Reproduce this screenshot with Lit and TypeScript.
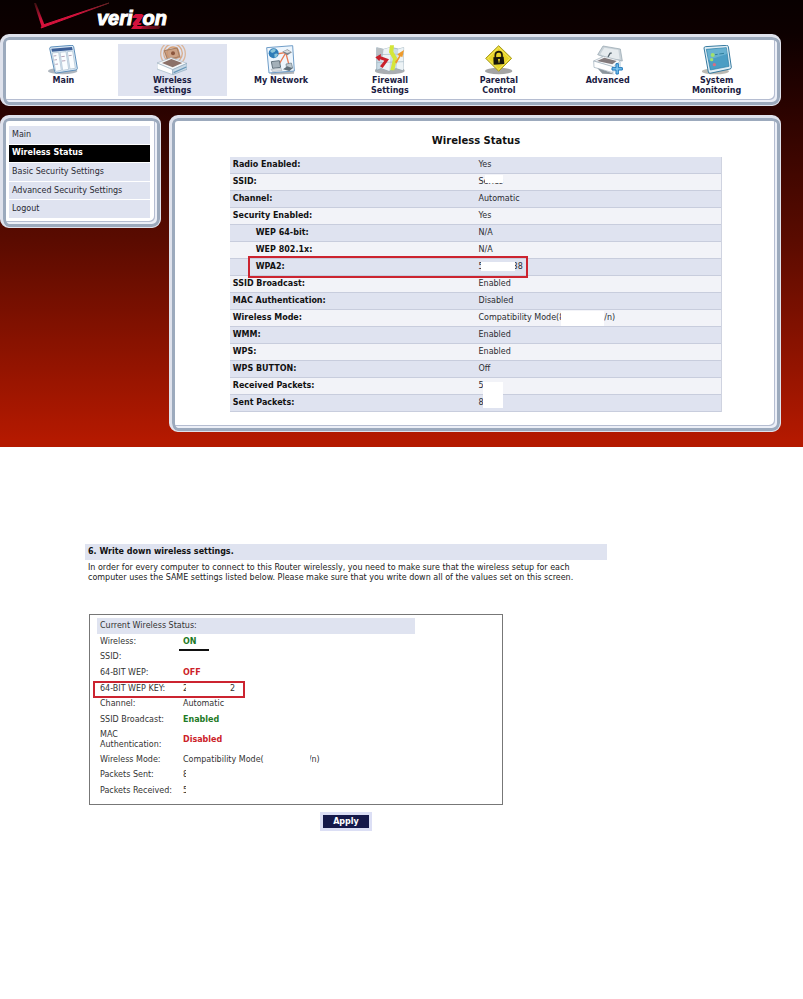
import { LitElement, html, svg, css, nothing, TemplateResult } from "lit";
import { customElement, property } from "lit/decorators.js";
import { classMap } from "lit/directives/class-map.js";

const icons: Record<string, TemplateResult> = {
  main: svg`
    <ellipse cx="44" cy="78" rx="44" ry="10" fill="#8b97a3" opacity=".7"/>
    <path d="M5 10Q5 7 9 6L72 1Q76 1 77 5L88 70Q88 74 84 75L25 84Q21 84 20 80Z" fill="#d9e8f5" stroke="#5d8fbb" stroke-width="3"/>
    <path d="M10 11L72 6L74 15L12 20Z" fill="#3d5f97"/>
    <path d="M13 24L32 22L40 76L23 79ZM36 22L54 20L62 73L44 76ZM58 20L74 18L82 70L66 72Z" fill="#fafdff" stroke="#a9bccd" stroke-width="2"/>
    <path d="M17 33l8-1M19 45l8-1M22 58l8-1M40 35l10-1M42 48l10-1M62 32l9-1" stroke="#a790a8" stroke-width="2.5"/>`,
  wireless: svg`
    <g fill="none" stroke="#d79f72" stroke-width="4"><circle cx="48" cy="26" r="37" opacity=".65"/><circle cx="48" cy="25" r="28" opacity=".8"/><circle cx="48" cy="24" r="18"/></g>
    <path d="M20 16L62 7L72 38L30 49Z" fill="#c99673" opacity=".85"/>
    <path d="M22 17L60 9L68 35L32 43Z" fill="none" stroke="#8d6b56" stroke-width="2"/>
    <circle cx="48" cy="25" r="6" fill="#8b563d"/>
    <path d="M0 54L42 38L90 55L47 74Z" fill="#f5f8fa" stroke="#a7b7c4" stroke-width="2"/>
    <path d="M15 54L43 42L76 54L47 67Z" fill="#8b7169"/>
    <path d="M0 54L47 74V89L0 72Z" fill="#fff" stroke="#9fb3c2" stroke-width="2"/>
    <path d="M47 74L90 55V73L47 89Z" fill="#c8d9e6" stroke="#8da7bc" stroke-width="2"/>
    <path d="M50 83L88 66" stroke="#6796b8" stroke-width="4"/>`,
  network: svg`
    <path d="M10 78L85 72L84 86L16 89Z" fill="#858d94" opacity=".65"/>
    <path d="M2 8L80 2L85 78L9 84Z" fill="#eef6fd" stroke="#6f9dc8" stroke-width="3"/>
    <path d="M31 27L62 22M59 24L39 58M60 25L70 64" stroke="#e77b55" stroke-width="4" fill="none"/>
    <circle cx="23" cy="25" r="15" fill="#2e7cb8"/>
    <path d="M12 18q8-9 18-4q-3 9-12 10zM25 28q7-5 11 0q-4 10-10 10z" fill="#8dc5d9"/>
    <path d="M49 20L64 13L78 22L64 31Z" fill="#7c858e"/><path d="M52 19L64 15L75 21L63 24Z" fill="#d9dde0"/>
    <path d="M16 50L40 47L44 67L20 70Z" fill="#a3b0b9" stroke="#657580" stroke-width="3"/>
    <path d="M15 73L45 69L48 77L20 80Z" fill="#dbe0e4" stroke="#788590"/>
    <path d="M60 57L76 54L80 69L62 72Z" fill="#bec9d0" stroke="#687984" stroke-width="2"/>
    <path d="M51 73L64 64L80 70L70 78Z" fill="#606e78"/>`,
  firewall: svg`
    <ellipse cx="44" cy="77" rx="45" ry="11" fill="#7d8388" opacity=".65"/>
    <path d="M5 8L26 13L48 7L70 12L86 8L84 76L65 70L43 78L20 70L5 76Z" fill="#cbdce7" stroke="#8ca4b2" stroke-width="2"/>
    <path d="M5 8L26 13L22 34H5Z" fill="#b9bfc3"/>
    <path d="M26 13L48 7L43 78L20 70ZM70 12L86 8L84 76L65 70Z" fill="#edf3f6"/>
    <path d="M5 29L87 27M5 53L86 50" stroke="#a5b9c6" stroke-width="2"/>
    <path d="M45 1H57L55 20L66 38L58 76H46L54 42L42 22Z" fill="#d4e639"/>
    <path d="M1 37L18 27L17 34L42 43L23 69L15 64L28 47L15 43L13 49Z" fill="#c9212b"/>
    <path d="M60 51L72 33L67 28L87 15L82 37L77 34L64 56Z" fill="#ee9a2c"/>`,
  parental: svg`
    <ellipse cx="44" cy="78" rx="41" ry="10" fill="#858585" opacity=".75"/>
    <path d="M44 2L83 40L44 79L5 40Z" fill="#e8d62a" stroke="#a59a22" stroke-width="3"/>
    <path d="M44 8L77 40L44 73L11 40Z" fill="none" stroke="#f8ed76" stroke-width="2"/>
    <path d="M34 39V30Q34 21 44 20Q53 20 54 29V38" fill="none" stroke="#17160b" stroke-width="5"/>
    <path d="M28 37L59 35L61 57L29 59Z" fill="#17160b"/>
    <circle cx="45" cy="44" r="3" fill="#e8d62a"/><path d="M45 44V53" stroke="#e8d62a" stroke-width="3"/>`,
  advanced: svg`
    <path d="M10 66L65 88L28 86Z" fill="#8c969d"/>
    <path d="M14 29L30 3L82 12L88 48L60 46Z" fill="#c9d2d8" stroke="#8fa0ab" stroke-width="2"/>
    <path d="M22 28L34 8L76 15L80 42L58 43Z" fill="#e6ebee"/>
    <path d="M45 36L51 25L56 24" stroke="#56646e" stroke-width="4" fill="none"/>
    <path d="M2 48L32 34L83 47L60 66Z" fill="#f7f9fb" stroke="#9daab3" stroke-width="2"/>
    <path d="M12 48L34 38L71 48L58 58Z" fill="#837a7c"/>
    <path d="M2 48L60 65V83L3 67Z" fill="#fff" stroke="#9bacb8" stroke-width="2"/>
    <path d="M60 65L84 48V67L60 83Z" fill="#d5e2eb"/>
    <path d="M69 56H76V68H88V75H76V87H69V75H57V68H69Z" fill="#7cc4ee" stroke="#1c76bb" stroke-width="3"/>`,
  monitoring: svg`
    <ellipse cx="40" cy="79" rx="41" ry="9" fill="#8f8a7e" opacity=".6"/>
    <path d="M6 9Q6 6 10 5L74 1Q78 1 79 5L88 67Q88 71 84 72L24 85Q20 85 19 81Z" fill="#e1eff6" stroke="#367aa0" stroke-width="3"/>
    <path d="M13 13L73 8L81 64L25 75Z" fill="#4b9dc4" stroke="#2579a2" stroke-width="2"/>
    <path d="M15 14L73 9L75 27L20 45Z" fill="#78bcd8" opacity=".65"/>
    <path d="M39 29l8-1M52 27l14-2" stroke="#317f9d" stroke-width="3"/>
    <g fill="#a2e16b"><circle cx="32" cy="30" r="6"/><circle cx="29" cy="44" r="5"/></g><circle cx="37" cy="59" r="5" fill="#d76e83"/>`,
};

interface Piece {
  text: string;
  kind: string;
}
interface Row {
  label: string;
  value: string | Piece[];
  kind?: string;
}

const cell = (value: string | Piece[]) =>
  typeof value === "string"
    ? value
    : value.map((p) => html`<span class="piece ${p.kind}">${p.text}</span>`);

@customElement("top-nav")
class TopNav extends LitElement {
  static styles = css`
    :host { display: block; }
    nav { display: grid; grid-template-columns: repeat(7, 1fr); }
    a {
      display: flex; flex-direction: column; align-items: center;
      min-height: 51px; color: #1b1b42; text-decoration: none;
      font-weight: bold; line-height: 10px; text-align: center;
    }
    a.active { background: #dfe3f0; }
    svg { width: 30px; height: 30px; margin: 1px 0; }
    span { max-width: 72px; }
  `;
  private items = [
    ["main", "Main"],
    ["wireless", "Wireless Settings"],
    ["network", "My Network"],
    ["firewall", "Firewall Settings"],
    ["parental", "Parental Control"],
    ["advanced", "Advanced"],
    ["monitoring", "System Monitoring"],
  ];
  render() {
    return html`<nav>
      ${this.items.map(
        ([icon, label]) => html`<a href="#${icon}" class=${classMap({ active: icon === "wireless" })}>
          <svg viewBox="0 0 90 90" aria-hidden="true">${icons[icon]}</svg><span>${label}</span>
        </a>`
      )}
    </nav>`;
  }
}

@customElement("side-menu")
class SideMenu extends LitElement {
  static styles = css`
    :host { display: block; }
    nav { display: grid; grid-auto-rows: 1fr; gap: 1px; min-height: 92px; }
    a {
      display: flex; align-items: center; padding: 0 3px;
      background: #dfe3f0; color: #2a2a33; text-decoration: none;
    }
    a.active { background: #000; color: #fff; font-weight: bold; }
  `;
  private items = ["Main", "Wireless Status", "Basic Security Settings", "Advanced Security Settings", "Logout"];
  render() {
    return html`<nav>
      ${this.items.map(
        (t) => html`<a href="#" class=${classMap({ active: t === "Wireless Status" })}>${t}</a>`
      )}
    </nav>`;
  }
}

@customElement("status-table")
class StatusTable extends LitElement {
  @property({ attribute: false }) rows: Row[] = [];
  static styles = css`
    :host { display: block; }
    table { width: 100%; border-collapse: separate; border-spacing: 0; border-right: 1px solid #cfd3e0; table-layout: fixed; }
    tr { position: relative; background: #f2f3f8; }
    tr:nth-child(odd) { background: #dfe3f0; }
    th, td {
      box-sizing: border-box; height: 17px; padding: 0 3px; line-height: 16px;
      text-align: left; border-bottom: 1px solid #c8cddd; white-space: nowrap;
    }
    th { width: 50%; color: #111; }
    td { color: #2b2b30; position: relative; }
    .sub th { padding-left: 26px; }
    .mark { position: absolute; left: 18px; top: -3px; bottom: -2px; width: 57%; box-sizing: border-box; border: 2px solid #cc2430; z-index: 1; }
    .piece { display: inline-block; vertical-align: top; height: 16px; }
    .blank, .wide { position: relative; background: #fff; margin-left: -3px; }
    .blank { width: 34px; height: 9px; margin-top: 3px; margin-right: -2px; }
    .wide { width: 43px; height: 15px; margin-top: 1px; }
    .veil { position: absolute; background: #fff; }
    .veil.name { left: 9px; top: 1px; width: 18px; height: 8px; }
    .veil.count { left: 7px; top: 4px; width: 20px; height: 26px; z-index: 1; }
  `;
  render() {
    return html`<table>
      <tbody>
        ${this.rows.map(
          (r) => html`<tr class=${r.kind ?? ""}>
            <th scope="row">${r.label}${r.kind?.includes("marked") ? html`<div class="mark"></div>` : nothing}</th>
            <td>${cell(r.value)}${r.kind === "name" || r.kind === "count" ? html`<div class="veil ${r.kind}"></div>` : nothing}</td>
          </tr>`
        )}
      </tbody>
    </table>`;
  }
}

@customElement("wireless-summary")
class WirelessSummary extends LitElement {
  static styles = css`
    :host { display: block; box-sizing: border-box; border: 1px solid #777; padding: 3px 7px 5px; color: #333; }
    table { width: 80%; height: 165px; border-collapse: collapse; table-layout: fixed; }
    caption { background: #dfe3f0; text-align: left; padding: 0 3px; line-height: 16px; }
    tr { position: relative; }
    th { width: 77px; font-weight: normal; line-height: 10px; }
    th, td { text-align: left; padding: 0 3px; white-space: nowrap; }
    .wrap th { white-space: normal; height: 24px; }
    .good td { color: #1e7a26; font-weight: bold; }
    .bad td { color: #cc2229; font-weight: bold; }
    .line { position: absolute; left: 82px; bottom: -1px; width: 30px; height: 2px; background: #111; }
    .mark { position: absolute; left: -4px; top: 0; bottom: -1px; width: 152px; box-sizing: border-box; border: 2px solid #cc2430; }
    .piece { display: inline-block; vertical-align: top; }
    .gap, .cover { position: relative; background: #fff; height: 10px; }
    .gap { width: 46px; margin-right: -1px; }
    .cover { width: 44px; margin-left: -2px; }
  `;
  private rows: Row[] = [
    { label: "Wireless:", value: "ON", kind: "good under" },
    { label: "SSID:", value: "" },
    { label: "64-BIT WEP:", value: "OFF", kind: "bad" },
    {
      label: "64-BIT WEP KEY:",
      value: [
        { text: "2", kind: "" },
        { text: "", kind: "cover" },
        { text: "2", kind: "" },
      ],
      kind: "marked",
    },
    { label: "Channel:", value: "Automatic" },
    { label: "SSID Broadcast:", value: "Enabled", kind: "good" },
    { label: "MAC Authentication:", value: "Disabled", kind: "bad wrap" },
    {
      label: "Wireless Mode:",
      value: [
        { text: "Compatibility Mode(", kind: "" },
        { text: "", kind: "gap" },
        { text: "/n)", kind: "" },
      ],
    },
    { label: "Packets Sent:", value: [{ text: "8", kind: "" }, { text: "", kind: "cover" }] },
    { label: "Packets Received:", value: [{ text: "5", kind: "" }, { text: "", kind: "cover" }] },
  ];
  render() {
    return html`<table>
      <caption>Current Wireless Status:</caption>
      <tbody>
        ${this.rows.map(
          (r) => html`<tr class=${r.kind ?? ""}>
            <th scope="row">${r.label}${r.kind === "marked" ? html`<div class="mark"></div>` : nothing}</th>
            <td>${cell(r.value)}${r.kind?.includes("under") ? html`<div class="line"></div>` : nothing}</td>
          </tr>`
        )}
      </tbody>
    </table>`;
  }
}

@customElement("app-root")
class AppRoot extends LitElement {
  static styles = css`
    :host {
      display: block; min-height: 100vh; background: #fff; color: #222;
      font: 8px/10px "DejaVu Sans", Verdana, sans-serif;
    }
    .console { background: linear-gradient(#080000, #0d0000 34px, #2b0300 110px, #5a0b00 240px, #b41900 440px); padding-right: 22px; padding-bottom: 15px; }
    .brand { display: flex; height: 34px; padding-left: 33px; }
    .brand svg { width: 136px; height: 35px; }
    .brand text { font: italic bold 20px "Liberation Sans", Arial, sans-serif; fill: #fff; stroke: #fff; stroke-width: 1px; }
    .brand .z { fill: #d5123c; stroke: none; }
    .panel {
      box-sizing: border-box; background: #fff; border-radius: 9px;
      border: solid #dfe2ec; border-width: 3px 1px 1px 3px;
      box-shadow: inset 0 0 0 3px #9caabd, inset -2px -2px 0 3px #eceff7, inset -3px -3px 0 3px #b5bdd1;
    }
    .top { padding: 7px 9px 9px 6px; }
    .body { display: grid; grid-template-columns: 161px 1fr; gap: 8px; align-items: start; margin-top: 9px; }
    .side { padding: 8px 10px 9px 6px; }
    .content { padding: 16px 0 19px; }
    h1 { margin: 0 0 10px; font-size: 10px; line-height: 13px; text-align: center; color: #111; }
    status-table { width: 81%; margin: 0 auto; }
    .guide { width: 65%; box-sizing: border-box; padding: 97px 0 20px; margin-left: 85px; }
    h2 { margin: 0; padding: 0 3px; font-size: 8px; line-height: 16px; background: #dfe3f0; color: #111; }
    p { margin: 3px 0 31px; padding-left: 3px; color: #222; }
    wireless-summary { width: 414px; max-width: 100%; margin-left: 4px; }
    form { display: flex; justify-content: center; padding-top: 7px; }
    button {
      font: bold 8px/10px "DejaVu Sans", Verdana, sans-serif; color: #fff; background: #15194a;
      border: 3px solid #dcdff5; padding: 2px 10px; height: 19px;
    }
  `;
  private rows: Row[] = [
    { label: "Radio Enabled:", value: "Yes" },
    { label: "SSID:", value: "Series", kind: "name" },
    { label: "Channel:", value: "Automatic" },
    { label: "Security Enabled:", value: "Yes" },
    { label: "WEP 64-bit:", value: "N/A", kind: "sub" },
    { label: "WEP 802.1x:", value: "N/A", kind: "sub" },
    {
      label: "WPA2:",
      value: [
        { text: "5", kind: "" },
        { text: "", kind: "blank" },
        { text: "88", kind: "" },
      ],
      kind: "sub marked",
    },
    { label: "SSID Broadcast:", value: "Enabled" },
    { label: "MAC Authentication:", value: "Disabled" },
    {
      label: "Wireless Mode:",
      value: [
        { text: "Compatibility Mode(", kind: "" },
        { text: "8", kind: "" },
        { text: "", kind: "wide" },
        { text: "/n)", kind: "" },
      ],
    },
    { label: "WMM:", value: "Enabled" },
    { label: "WPS:", value: "Enabled" },
    { label: "WPS BUTTON:", value: "Off" },
    { label: "Received Packets:", value: "5", kind: "count" },
    { label: "Sent Packets:", value: "8" },
  ];
  render() {
    return html`
      <div class="console">
        <div class="brand">
          <svg viewBox="0 0 136 35" role="img" aria-label="verizon">
            <defs>
              <linearGradient id="a" x1="0" y1="1" x2="1" y2="0"><stop offset="0" stop-color="#d5123c"/><stop offset=".55" stop-color="#d5123c"/><stop offset="1" stop-color="#5a2020"/></linearGradient>
              <linearGradient id="b" x1="0" y1="0" x2="0" y2="1"><stop offset="0" stop-color="#3a1010"/><stop offset=".7" stop-color="#d5123c"/></linearGradient>
              <linearGradient id="c"><stop offset="0" stop-color="#d5123c"/><stop offset="1" stop-color="#400a10"/></linearGradient>
            </defs>
            <path d="M1 3L9 28L12 26L3 3Z" fill="url(#b)"/>
            <path d="M8 28L76 3L10 25Z" fill="url(#a)" stroke="url(#a)"/>
            <path d="M102 26H128L126 29H99Z" fill="url(#c)"/>
            <text x="64" y="25">veri<tspan class="z">z</tspan>on</text>
            <path d="M101 15H111L104 26H110L108 29H98L106 18H99Z" fill="#d5123c"/>
          </svg>
        </div>
        <header class="panel top"><top-nav></top-nav></header>
        <div class="body">
          <aside class="panel side"><side-menu></side-menu></aside>
          <main class="panel content">
            <h1>Wireless Status</h1>
            <status-table .rows=${this.rows}></status-table>
          </main>
        </div>
      </div>
      <section class="guide">
        <h2>6. Write down wireless settings.</h2>
        <p>In order for every computer to connect to this Router wirelessly, you need to make sure that the wireless setup for each computer uses the SAME settings listed below. Please make sure that you write down all of the values set on this screen.</p>
        <wireless-summary></wireless-summary>
        <form><button type="button">Apply</button></form>
      </section>
    `;
  }
}
